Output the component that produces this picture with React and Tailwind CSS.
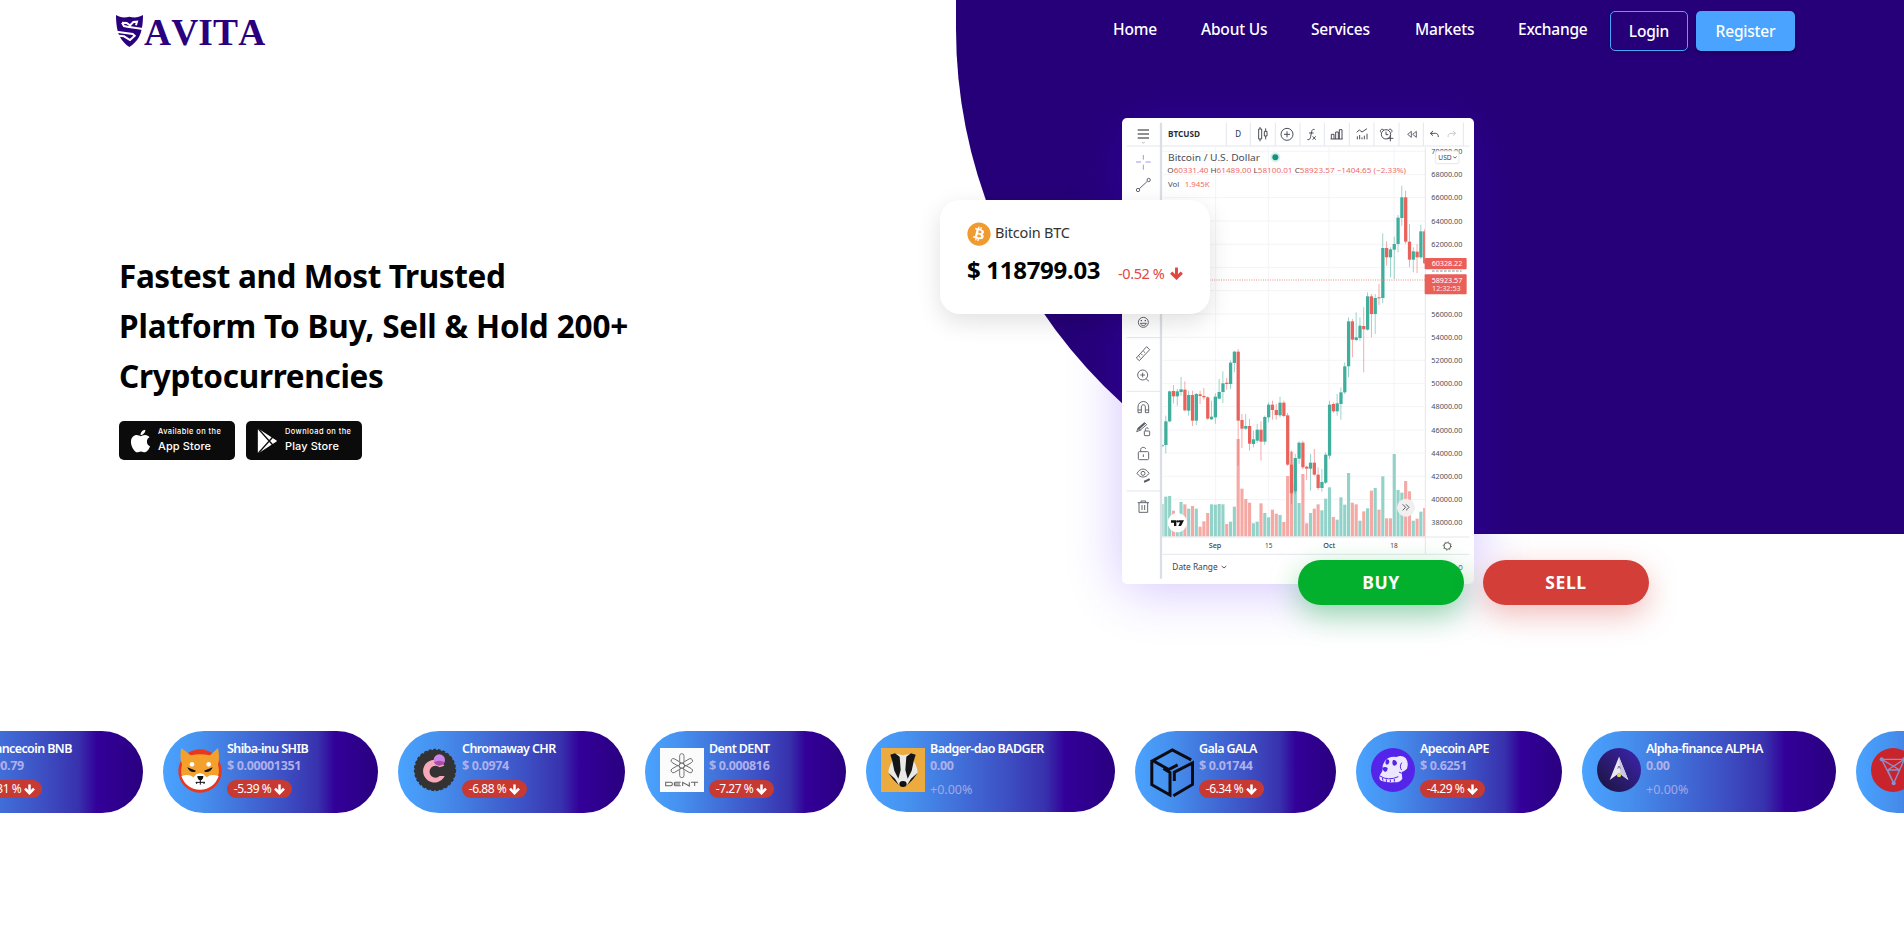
import React from "react";
import { FaApple, FaBitcoin } from "react-icons/fa";

const UP = "#3fae9c";
const DOWN = "#e9635c";

// [up, bodyTop, bodyBottom, wickTop, wickBottom, volumeTop]
const CANDLES = [
  [1, 1033, 1037, 1030, 1040, 1210],
  [1, 962, 1033, 945, 1058, 1188],
  [1, 872, 962, 870, 965, 1186],
  [0, 871, 887, 853, 908, 1230],
  [1, 872, 887, 865, 915, 1240],
  [1, 866, 874, 829, 885, 1204],
  [0, 867, 929, 842, 932, 1211],
  [1, 883, 930, 870, 945, 1224],
  [0, 883, 960, 870, 976, 1216],
  [1, 880, 960, 877, 973, 1224],
  [0, 881, 886, 870, 910, 1278],
  [0, 886, 890, 862, 897, 1262],
  [0, 890, 954, 887, 957, 1237],
  [1, 948, 956, 900, 958, 1211],
  [1, 888, 950, 878, 969, 1212],
  [1, 874, 894, 835, 896, 1210],
  [1, 848, 874, 812, 907, 1211],
  [0, 846, 850, 832, 867, 1270],
  [1, 786, 850, 780, 865, 1263],
  [1, 753, 787, 750, 815, 1218],
  [0, 753, 960, 745, 1095, 1015],
  [0, 958, 984, 940, 1042, 1164],
  [1, 976, 984, 940, 988, 1195, 0],
  [0, 976, 1029, 955, 1050, 1206],
  [1, 1016, 1030, 990, 1040, 1268],
  [1, 987, 1020, 970, 1027, 1263],
  [0, 987, 1023, 962, 1080, 1208],
  [1, 949, 1023, 945, 1032, 1237],
  [1, 912, 950, 905, 965, 1250],
  [0, 912, 928, 900, 957, 1227],
  [0, 928, 943, 910, 957, 1239],
  [1, 906, 944, 888, 950, 1243],
  [0, 906, 946, 900, 950, 1264],
  [0, 944, 1092, 937, 1095, 1126],
  [0, 1092, 1178, 1050, 1210, 1053],
  [1, 1072, 1172, 1060, 1180, 1150],
  [1, 1026, 1074, 1022, 1090, 1207],
  [0, 1026, 1100, 1020, 1105, 1120],
  [0, 1098, 1104, 1095, 1138, 1268],
  [1, 1086, 1104, 1060, 1170, 1237],
  [0, 1086, 1122, 1045, 1125, 1224],
  [0, 1122, 1162, 1100, 1168, 1211],
  [1, 1144, 1162, 1105, 1173, 1229],
  [1, 1062, 1146, 1055, 1150, 1194],
  [1, 912, 1065, 900, 1075, 1160],
  [0, 910, 932, 905, 937, 1249],
  [1, 908, 932, 880, 945, 1257],
  [1, 875, 910, 860, 957, 1190],
  [1, 797, 875, 785, 880, 1212],
  [1, 662, 797, 650, 830, 1117],
  [0, 662, 717, 655, 770, 1206],
  [1, 710, 718, 635, 722, 1211, 0],
  [1, 675, 712, 650, 720, 1260],
  [0, 676, 686, 620, 815, 1232],
  [1, 587, 687, 575, 690, 1223],
  [0, 587, 640, 580, 710, 1170],
  [1, 592, 640, 580, 700, 1162],
  [0, 590, 593, 550, 613, 1227],
  [1, 442, 592, 398, 608, 1127],
  [0, 442, 470, 422, 495, 1253],
  [1, 446, 470, 440, 530, 1253, 0],
  [1, 430, 447, 408, 535, 1060],
  [1, 351, 430, 343, 455, 1168],
  [1, 290, 352, 255, 375, 1176],
  [0, 290, 423, 270, 430, 1141],
  [0, 423, 477, 370, 500, 1172],
  [1, 452, 477, 440, 515, 1260],
  [0, 453, 470, 430, 517, 1254],
  [1, 392, 470, 372, 475, 1233],
  [0, 392, 488, 385, 490, 1222],
];

const GRID_X = [317, 475, 657, 852];
const PRICES = [
  [152, "70000.00"], [222, "68000.00"], [291, "66000.00"], [361, "64000.00"],
  [431, "62000.00"], [501, "60000.00"], [570, "58000.00"], [640, "56000.00"],
  [710, "54000.00"], [779, "52000.00"], [849, "50000.00"], [918, "48000.00"],
  [988, "46000.00"], [1057, "44000.00"], [1127, "42000.00"], [1197, "40000.00"],
  [1266, "38000.00"],
];

function ArrowDown({ className }) {
  return (
    <svg viewBox="0 0 24 24" className={className} fill="none" stroke="currentColor">
      <path d="M12 1V18" strokeWidth="5.4" />
      <path d="M2.2 10.2L12 20L21.8 10.2" strokeWidth="5.8" />
    </svg>
  );
}

function Chart() {
  return (
    <svg viewBox="36 52 1056 1398" className="block h-full w-full" fontFamily="'Noto Sans', sans-serif" fill="none">
      <defs>
        <clipPath id="plot">
          <rect x="157" y="140" width="788" height="1168" />
        </clipPath>
      </defs>

      <g stroke="#f4f4f7" strokeWidth="3">
        {PRICES.map(([y]) => <path key={y} d={`M158 ${y}H945`} />)}
        {GRID_X.map((x) => <path key={x} d={`M${x} 140V1308`} />)}
      </g>

      <g clipPath="url(#plot)">
        {CANDLES.map((c, i) => {
          const x = 156 + i * 11.42;
          const volUp = c.length > 6 ? c[6] : c[0];
          return (
            <g key={i}>
              <rect x={x - 4.6} y={c[5]} width="9.4" height={1308 - c[5]} fill={volUp ? "#93d2c8" : "#f5a9a5"} />
              <rect x={x - 1.2} y={c[3]} width="2.4" height={c[4] - c[3]} fill={c[0] ? UP : DOWN} opacity="0.65" />
              <rect x={x - 4.7} y={c[1]} width="9.8" height={c[2] - c[1]} fill={c[0] ? UP : DOWN} />
            </g>
          );
        })}
      </g>
      <path d="M158 538H945" stroke="#e88e8b" strokeWidth="3" strokeDasharray="3 4" />

      {/* toolbar and axis separators */}
      <g stroke="#e4e6ee" strokeWidth="3">
        {[349, 421, 496, 570, 643, 718, 792, 867, 940, 1060].map((x) => <path key={x} d={`M${x} 66V136`} />)}
        <path d="M50 136H1078M50 711H150M50 872H150M50 1171H150M158 1309H1078M158 1361H1078M946 140V1361" />
      </g>
      <path d="M153 66V1434" stroke="#dcdee6" strokeWidth="7" />

      {/* top toolbar */}
      <path d="M83 88H117M83 100H117M83 112H117" stroke="#222" strokeWidth="3.6" />
      <path d="M96 124l4 4 4-4" stroke="#999" strokeWidth="2" />
      <g fill="#2b2e38">
        <text x="174" y="109" fontSize="24" fontWeight="700" textLength="96" lengthAdjust="spacingAndGlyphs">BTCUSD</text>
        <text x="376" y="109.5" fontSize="24">D</text>
      </g>
      <g stroke="#3f424c" strokeWidth="2.8">
        <path d="M446 85h9v30h-9zM450 79v6M450 115v7M463 92h8v14h-8zM467 83v9M467 106v10" />
        <circle cx="531" cy="101" r="18" />
        <path d="M522 101h18M531 92v18" />
        <path d="M592 117c8 1 9-4 10-10l3-14c1-6 4-8 9-6M597 97h14M608 107l9 10M617 107l-9 10" />
        <path d="M664 115V101h8v14M677 115V94h8v21M688 115V87h8v28M662 115h36" />
        <path d="M740 95l8-7 8 6 15-10M742 116v-9M749 116v-13M756 116v-6M763 116v-11M771 116v-17" />
        <circle cx="828" cy="101" r="14" />
        <path d="M828 93v9h7M812 95c-3-8 3-11 9-8M836 87c6-4 12 1 9 8M841 104v18M832 113h18" />
        <path d="M904 92l-11 9 11 9zM919 92l-11 9 11 9z" strokeWidth="2.4" />
        <path d="M969 91l-8 7 8 7M962 98h14c6 0 9 4 9 11" />
        <path d="M1029 91l8 7-8 7M1036 98h-13c-6 0-9 4-9 11" stroke="#c5c7ce" />
      </g>

      {/* header of the pair */}
      <g fill="#4a4d57">
        <text x="174" y="180" fontSize="27" textLength="276" lengthAdjust="spacingAndGlyphs">Bitcoin / U.S. Dollar</text>
        <text x="172" y="216" fontSize="22" textLength="716" lengthAdjust="spacingAndGlyphs">
          O<tspan fill="#ee6c67">60331.40</tspan> H<tspan fill="#ee6c67">61489.00</tspan> L<tspan fill="#ee6c67">58100.01</tspan> C<tspan fill="#ee6c67">58923.57 −1404.65 (−2.33%)</tspan>
        </text>
        <text x="174" y="260" fontSize="23" textLength="34" lengthAdjust="spacingAndGlyphs">Vol</text>
        <text x="224" y="260" fontSize="22" fill="#ee6c67" textLength="75" lengthAdjust="spacingAndGlyphs">1.945K</text>
      </g>
      <circle cx="496" cy="170" r="15" fill="#d5efea" />
      <circle cx="496" cy="170" r="9" fill="#17917e" />

      {/* price scale */}
      <g fill="#4b4e58" fontSize="22">
        {PRICES.filter((p) => p[0] !== 501 && p[0] !== 570).map(([y, t]) => (
          <text key={y} x="964" y={y + 8} textLength="93" lengthAdjust="spacingAndGlyphs">{t}</text>
        ))}
      </g>
      <rect x="976" y="151" width="71" height="38" rx="7" fill="#fff" stroke="#dfe1e8" strokeWidth="2.5" />
      <text x="985" y="177" fontSize="21" fill="#3f424c" textLength="40" lengthAdjust="spacingAndGlyphs">USD</text>
      <path d="M1030 168l5 4 5-4" stroke="#3f424c" strokeWidth="2.4" />
      <path d="M966 511H1055" stroke="#8a8c94" strokeWidth="3" strokeDasharray="8 4" />
      <rect x="944" y="472" width="126" height="34" rx="3" fill="#ea5f58" />
      <rect x="944" y="521" width="126" height="60" rx="3" fill="#ea5f58" />
      <g fill="#fff" fontSize="22">
        <text x="965" y="497" textLength="92" lengthAdjust="spacingAndGlyphs">60328.22</text>
        <text x="965" y="546" textLength="92" lengthAdjust="spacingAndGlyphs">58923.57</text>
        <text x="966" y="572" textLength="86" lengthAdjust="spacingAndGlyphs" opacity="0.85">12:32:53</text>
      </g>

      {/* drawing tools */}
      <path d="M100 163v14M100 192v15M78 184h15M107 184h15" stroke="#9b97ee" strokeWidth="3" />
      <g stroke="#5a5d66" strokeWidth="2.8">
        <circle cx="84" cy="268" r="5" /><circle cx="116" cy="238" r="5" />
        <path d="M88 264l24-22" />
        <circle cx="100" cy="665" r="15" />
        <path d="M91 668c3 9 15 9 18 0z" />
        <path d="M94 658v4M106 658v4" strokeWidth="4" />
        <path d="M79 772l31-34 9 9-31 33zM86 766l5 5M93 759l5 5M100 751l5 5" />
        <circle cx="98" cy="823" r="15" />
        <path d="M98 816v14M91 823h14M108 834l9 8" />
        <path d="M84 936v-17c0-22 32-22 32 0v17h-10v-17c0-9-12-9-12 0v17zM84 928h10M106 928h10" />
        <path d="M80 993l4-10 20-17 6 6-20 17zM86 983l6 6" />
        <path d="M84 986l20-18" strokeWidth="6" />
        <rect x="103" y="991" width="16" height="14" rx="2" /><path d="M106 991v-4c0-7 9-7 9-2" />
        <rect x="85" y="1053" width="31" height="24" rx="3" /><path d="M92 1053v-6c0-9 14-9 15-2M100 1061v8" />
        <path d="M81 1118c10-17 26-17 36 0c-10 15-26 15-36 0z" /><circle cx="99" cy="1118" r="6" />
        <path d="M102 1143c5-1 10-4 17-8" strokeWidth="6" />
        <path d="M83 1206h34M93 1206v-5h14v5M87 1206v29h26v-29M96 1213v15M104 1213v15" />
      </g>

      {/* floating controls */}
      <circle cx="202" cy="1266" r="29" fill="#fff" />
      <path d="M183 1259h16v17h-7v-10h-9zM206 1259h16l-9 17h-8l5-11h-4z" fill="#111" />
      <circle cx="203" cy="1262" r="3.6" fill="#111" />
      <circle cx="888" cy="1221" r="27" fill="#f1efef" />
      <path d="M878 1211l9 9-9 9M888 1211l9 9-9 9" stroke="#55585f" strokeWidth="3" />

      {/* time scale and footer */}
      <g fill="#3c3f49" fontSize="23" fontWeight="500">
        <text x="296" y="1343" textLength="38" lengthAdjust="spacingAndGlyphs">Sep</text>
        <text x="465" y="1343" fontWeight="400" textLength="22" lengthAdjust="spacingAndGlyphs">15</text>
        <text x="640" y="1343" textLength="36" lengthAdjust="spacingAndGlyphs">Oct</text>
        <text x="841" y="1343" fontWeight="400" textLength="22" lengthAdjust="spacingAndGlyphs">18</text>
        <text x="187" y="1408" fontSize="26" fontWeight="400" textLength="136" lengthAdjust="spacingAndGlyphs">Date Range</text>
      </g>
      <text x="1044" y="1408" fontSize="24" fill="#4a6cf0">o</text>
      <path d="M335 1396l7 6 7-6" stroke="#3c3f49" strokeWidth="2.6" />
      <circle cx="1012" cy="1336" r="10" stroke="#555" strokeWidth="2.8" />
      <circle cx="1012" cy="1336" r="12.5" stroke="#555" strokeWidth="3" strokeDasharray="3 6.8" />
    </svg>
  );
}

function Logo() {
  return (
    <div className="flex items-start">
      <svg viewBox="0 0 81 96" className="mt-[2px] h-[32px] w-[27px]">
        <path d="M0 0C12 8 26 9 40 5C54 9 68 8 81 0C81 24 78 50 69 66C62 79 52 88 40 96C28 88 19 79 12 66C3 50 0 24 0 0Z" fill="#2a007e" />
        <path d="M18 23L24 33L34 35L81 42M18 23L32 24L42 31L52 21L63 20L60 31" fill="none" stroke="#fff" strokeWidth="6" />
        <path d="M1 50L50 57L56 62L42 75L24 64L8 62" fill="none" stroke="#fff" strokeWidth="6" />
      </svg>
      <span className="ml-[1px] font-['Liberation_Serif',serif] text-[37.5px] leading-[40px] font-bold tracking-[0.1px] text-[#2a007e] [font-kerning:none]">AVITA</span>
    </div>
  );
}

function ShibaIcon() {
  return (
    <svg viewBox="0 0 132 132" className="h-[44px] w-[44px] overflow-visible">
      <circle cx="66" cy="69" r="65" fill="#e8361f" />
      <path d="M10 0L38 22Q66 16 96 22L120 0Q126 30 120 50Q128 80 112 100Q92 124 66 124Q40 124 20 100Q4 80 12 50Q4 28 10 0Z" fill="#f3a02c" />
      <path d="M10 84Q34 76 46 88L56 78Q66 74 76 78L86 88Q98 76 122 84Q108 124 66 125Q24 124 10 84Z" fill="#fff" />
      <path d="M28 58L54 68L50 72Q34 74 28 58ZM104 58L78 68L82 72Q98 74 104 58ZM58 84h18q0 12-9 13q-9-1-9-13Z" fill="#111" />
      <circle cx="42" cy="49" r="7" fill="#fff" /><circle cx="92" cy="49" r="7" fill="#fff" />
      <path d="M67 96v14M53 103h28M56 103v5M78 103v5" stroke="#111" strokeWidth="3" fill="none" />
    </svg>
  );
}

function ChromawayIcon() {
  return (
    <svg viewBox="0 0 132 132" className="h-[44px] w-[44px]">
      <circle cx="66" cy="66" r="61" fill="#333" stroke="#333" strokeWidth="5" strokeDasharray="9 5" />
      <path d="M94 53A34 34 0 1 0 95 84H80A18 18 0 1 1 80 58L94 53Z" fill="#f8a9b9" />
      <circle cx="79" cy="36" r="17" fill="#cf82e8" />
      <path d="M63 43Q80 34 95 43Q89 53 79 53Q69 53 63 43Z" fill="#a84fa0" />
    </svg>
  );
}

function DentIcon() {
  return (
    <svg viewBox="0 0 132 132" className="h-[44px] w-[44px] bg-[#fbfbfb]" fill="none" stroke="#666" strokeWidth="2.6">
      {[0, 60, 120, 180, 240, 300].map((a) => (
        <rect key={a} x="59" y="17" width="13" height="29" rx="6.5" transform={`rotate(${a} 65.5 53)`} />
      ))}
      <circle cx="65.5" cy="53" r="8" />
      <path d="M17 103h16q4 0 4 4v2q0 4-4 4H17zM62 103H46q-3 0-3 4v2q0 4 3 4h16M43 108h17M68 114v-11l20 11v-11M93 103h21M104 103v11" strokeWidth="3.2" />
    </svg>
  );
}

function BadgerIcon() {
  return (
    <svg viewBox="0 0 132 132" className="h-[44px] w-[44px] bg-[#ecab3e]">
      <path d="M30 22L43 17L66 22L89 17L102 22L98 38Q112 64 109 76L92 92L78 112H54L40 92L23 76Q20 64 34 38Z" fill="#e9e9e6" />
      <path d="M28 20L42 16L56 26L59 66L52 92L40 68L34 40ZM104 20L90 16L76 26L73 66L80 92L92 68L98 40Z" fill="#151515" />
      <path d="M22 74L42 92L54 112L36 94ZM110 74L90 92L78 112L96 94Z" fill="#151515" />
      <ellipse cx="66" cy="108" rx="11" ry="9" fill="#111" />
    </svg>
  );
}

function GalaIcon() {
  return (
    <svg viewBox="0 0 132 148" className="h-[49px] w-[44px]" fill="none" stroke="#0b0b14" strokeWidth="9">
      <path d="M124 36L67 6L8 38L56 65L83 51" />
      <path d="M5 40V111L60 142V74L40 62" />
      <path d="M73 100V73L128 45V110L70 144" />
    </svg>
  );
}

function ApeIcon() {
  return (
    <svg viewBox="0 0 132 132" className="h-[44px] w-[44px]">
      <circle cx="66" cy="66" r="66" fill="#5424e8" />
      <path d="M42 38Q54 24 76 27Q92 20 104 30Q114 44 108 62Q100 70 92 72L94 92Q88 104 68 103Q46 104 30 98Q20 90 30 76Q36 70 35 52Z" fill="#ece6ff" />
      <path d="M46 34q8-2 9 6q0 10-8 10q-7-4-1-16ZM66 36q10-2 12 8q0 8-9 9q-8-4-3-17ZM34 60q8-6 16 0q0 10-8 12q-8-4-8-12Z" fill="#5424e8" />
      <path d="M27 84q24 16 55 2M34 90l2 8M46 94v8M58 95v7M70 93v8M92 66q-8-8 0-22M84 72l8 4" stroke="#5424e8" strokeWidth="3" fill="none" />
    </svg>
  );
}

function AlphaIcon() {
  return (
    <svg viewBox="0 0 132 132" className="h-[44px] w-[44px]">
      <defs>
        <linearGradient id="alpha" x1="0.9" y1="0.1" x2="0.1" y2="0.9">
          <stop offset="0" stopColor="#3a23a6" /><stop offset="1" stopColor="#1e1546" />
        </linearGradient>
      </defs>
      <circle cx="66" cy="66" r="66" fill="url(#alpha)" />
      <path d="M66 26L94 96L66 76L38 96Z" fill="#e9e6f5" />
      <path d="M66 26L94 96L70 78Z" fill="#c9c4e2" />
      <circle cx="66" cy="82" r="6" fill="#e3dc4b" /><path d="M62 62l4-8 4 8" stroke="#333" strokeWidth="2" fill="none" />
    </svg>
  );
}

function ChilizIcon() {
  return (
    <svg viewBox="0 0 132 132" className="h-[44px] w-[44px]">
      <circle cx="66" cy="66" r="66" fill="#c9242c" />
      <g stroke="#8b90cc" strokeWidth="4" fill="none">
        <path d="M32 34H100L68 106ZM32 34L86 66L68 106L50 66L100 34M50 66H86" />
      </g>
      <g fill="#8b90cc"><circle cx="32" cy="34" r="6" /><circle cx="100" cy="34" r="6" /><circle cx="68" cy="106" r="6" /></g>
    </svg>
  );
}

const COINS = [
  { name: "Binancecoin BNB", price: "$ 690.79", change: "-1.31 %", size: "w-[230px]", icon: null },
  { name: "Shiba-inu SHIB", price: "$ 0.00001351", change: "-5.39 %", size: "w-[215px]", icon: <ShibaIcon /> },
  { name: "Chromaway CHR", price: "$ 0.0974", change: "-6.88 %", size: "w-[227px]", icon: <ChromawayIcon /> },
  { name: "Dent DENT", price: "$ 0.000816", change: "-7.27 %", size: "w-[201px]", icon: <DentIcon /> },
  { name: "Badger-dao BADGER", price: "0.00", change: null, size: "w-[249px]", icon: <BadgerIcon /> },
  { name: "Gala GALA", price: "$ 0.01744", change: "-6.34 %", size: "w-[201px]", icon: <GalaIcon /> },
  { name: "Apecoin APE", price: "$ 0.6251", change: "-4.29 %", size: "w-[206px]", icon: <ApeIcon /> },
  { name: "Alpha-finance ALPHA", price: "0.00", change: null, size: "w-[254px]", icon: <AlphaIcon /> },
  { name: "Chiliz", price: "$ 0.0371", change: "-5.12 %", size: "w-[201px]", icon: <ChilizIcon /> },
];

function Coin({ coin }) {
  return (
    <div className={`${coin.size} ${coin.change ? "h-[82px]" : "h-[81px]"} flex shrink-0 rounded-full bg-[linear-gradient(90deg,#4aa3ff_0%,#4690ee_18%,#3d50c4_56%,#3831ad_72%,#330099_80%,#2a0080_100%)] pt-[17px] pl-[15px]`}>
      <div className="w-[44px] shrink-0">{coin.icon}</div>
      <div className="-mt-[8px] ml-[5px] whitespace-nowrap">
        <div className="text-[12.5px] leading-[17px] font-semibold tracking-[-0.6px] text-white">{coin.name}</div>
        <div className="text-[12.5px] leading-[17px] font-bold tracking-[-0.35px] text-[#aeb0ec]">{coin.price}</div>
        {coin.change ? (
          <div className="mt-[6px] flex h-[18px] w-[65px] items-center justify-center gap-[3px] rounded-full bg-[#c63a33] text-[12px] tracking-[-0.5px] text-white">
            <span>{coin.change}</span>
            <ArrowDown className="h-[11px] w-[11px]" />
          </div>
        ) : (
          <div className="mt-[7px] text-[12.5px] leading-[17px] text-[#a3a8e6]">+0.00%</div>
        )}
      </div>
    </div>
  );
}

function StoreBadge({ icon, top, name }) {
  return (
    <div className="flex h-[39px] w-[116px] rounded-[5px] bg-[#0b0b0b] pl-[11px] font-[Inter,sans-serif] whitespace-nowrap text-white">
      <div className="flex w-[21px] items-center">{icon}</div>
      <div className="ml-[7px] pt-[6px]">
        <div className="text-[7.4px] leading-[9px] font-medium tracking-[0.45px]">{top}</div>
        <div className="mt-[3px] text-[11px] leading-[14px] font-medium tracking-[0.1px]">{name}</div>
      </div>
    </div>
  );
}

const NAV = [
  ["Home", "w-[88px]"],
  ["About Us", "w-[110px]"],
  ["Services", "w-[104px]"],
  ["Markets", "w-[103px]"],
  ["Exchange", "w-[92px]"],
];

export default function App() {
  return (
    <div className="relative h-[949px] w-[1904px] overflow-hidden bg-white font-['Noto_Sans',sans-serif]">
      <div className="absolute top-0 right-0 h-[534px] w-[948px] rounded-bl-[505px] bg-[#260078]" />

      <header className="relative flex h-[62px] items-start pl-[116px]">
        <div className="w-[997px] pt-[13px]"><Logo /></div>
        <nav className="flex pt-[17px] text-[15.5px] leading-6 font-medium tracking-[-0.2px] text-white">
          {NAV.map(([label, size]) => <a key={label} className={`${size} whitespace-nowrap`}>{label}</a>)}
        </nav>
        <div className="mt-[11px] flex gap-2 text-[15.5px] font-medium tracking-[-0.2px] text-white">
          <button className="h-[40px] w-[78px] rounded-[5px] border border-[#4aa3ff] pt-px shadow-[0_2px_4px_rgba(0,0,0,0.2)]">Login</button>
          <button className="h-[40px] w-[99px] rounded-[5px] bg-[#4aa3ff] pt-px shadow-[0_2px_4px_rgba(0,0,0,0.3)]">Register</button>
        </div>
      </header>

      <main className="relative flex h-[669px]">
        <section className="w-[1122px] pt-[189px] pl-[119px]">
          <h1 className="text-[31.5px] leading-[50px] font-bold whitespace-nowrap text-black">
            <span className="block tracking-[-0.4px]">Fastest and Most Trusted</span>
            <span className="block tracking-[-0.14px]">Platform To Buy, Sell &amp; Hold 200+</span>
            <span className="block tracking-[-0.3px]">Cryptocurrencies</span>
          </h1>
          <div className="mt-5 flex gap-[11px]">
            <StoreBadge icon={<FaApple className="h-[26px] w-[21px]" />} top="Available on the" name="App Store" />
            <StoreBadge
              icon={
                <svg viewBox="0 0 60 72" className="h-[24px] w-[21px]">
                  <path d="M3 2L56 36L3 70Z" fill="#fff" stroke="#fff" strokeWidth="4" strokeLinejoin="round" />
                  <path d="M3 0L46 48M3 72L46 24" stroke="#0b0b0b" strokeWidth="4" />
                </svg>
              }
              top="Download on the"
              name="Play Store"
            />
          </div>
        </section>

        <section className="relative mt-[56px] h-[466px] w-[352px]">
          <div className="h-full w-full overflow-hidden rounded-[5px] bg-white shadow-[0_5px_55px_rgba(77,0,255,0.24)]">
            <Chart />
          </div>

          <div className="absolute top-[82px] -left-[182px] h-[114px] w-[270px] rounded-[20px] bg-white pt-[22px] pl-[27px] shadow-[0_8px_24px_rgba(0,0,0,0.12)]">
            <div className="flex h-6 items-center gap-1">
              <FaBitcoin className="h-[24px] w-[24px] text-[#f09a30]" />
              <span className="-mt-[3px] text-[14.5px] tracking-[-0.2px] text-[#333]">Bitcoin BTC</span>
            </div>
            <div className="mt-[6px] flex h-[36px] items-center whitespace-nowrap">
              <span className="w-[151px] text-[24px] font-bold tracking-[-0.3px] text-black">$ 118799.03</span>
              <span className="mt-[7px] w-[52px] text-[14.5px] tracking-[-0.4px] text-[#de4840]">-0.52 %</span>
              <ArrowDown className="mt-[6px] h-[13px] w-[13px] text-[#de4840]" />
            </div>
          </div>

          <div className="absolute top-[442px] left-[176px] flex gap-[19px] text-[17.5px] leading-[45px] font-bold tracking-[0.6px] text-white">
            <button className="h-[45px] w-[166px] rounded-full bg-[#02b02e] shadow-[0_10px_30px_rgba(2,176,46,0.4)]">BUY</button>
            <button className="h-[45px] w-[166px] rounded-full bg-[#d33f38] shadow-[0_10px_30px_rgba(211,63,56,0.35)]">SELL</button>
          </div>
        </section>
      </main>

      <div className="relative -ml-[87px] flex gap-5">
        {COINS.map((c) => <Coin key={c.name} coin={c} />)}
      </div>
    </div>
  );
}
